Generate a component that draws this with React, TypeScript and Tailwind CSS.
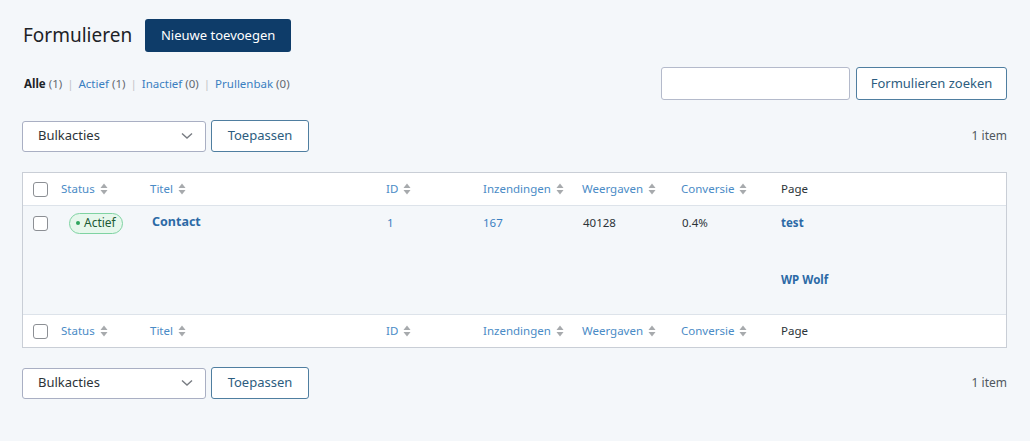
import React from "react";

const font = { fontFamily: '"Noto Sans", "Open Sans", sans-serif' };

function Sort() {
  return (
    <svg width="8" height="12" viewBox="0 0 8 12" className="ml-[5px] inline-block">
      <path d="M4 0.5 L7.5 5 L0.5 5 Z" fill="#a7aaad" />
      <path d="M4 11.5 L7.5 7 L0.5 7 Z" fill="#a7aaad" />
    </svg>
  );
}

function Checkbox() {
  return <div className="w-[15px] h-[15px] rounded-[3px] border border-[#8c8f94] bg-white" />;
}

function HeadRow({ top }: { top?: boolean }) {
  const cols: [string, string, boolean][] = [
    ["Status", "w-[89px]", true],
    ["Titel", "w-[236px]", true],
    ["ID", "w-[97px]", true],
    ["Inzendingen", "w-[99px]", true],
    ["Weergaven", "w-[99px]", true],
    ["Conversie", "w-[100px]", true],
    ["Page", "flex-1", false],
  ];
  return (
    <div
      className={`flex items-center h-[33px] bg-white text-[11.5px] ${
        top ? "border-b border-[#dde3ea]" : "border-t border-[#dde3ea]"
      }`}
    >
      <div className="w-[38px] pl-[10px] flex items-center">
        <Checkbox />
      </div>
      {cols.map(([l, w, s]) => (
        <div key={l} className={`${w} flex items-center`}>
          <span className={s ? "text-[#4a8bc6]" : "text-[#2c3338]"}>{l}</span>
          {s && <Sort />}
        </div>
      ))}
    </div>
  );
}

function Toolbar() {
  return (
    <div className="flex items-center">
      <div className="w-[184px] h-[31px] bg-white border border-[#a9afc3] rounded-[3px] flex items-center justify-between pl-[15px] pr-[12px] text-[13px] text-[#2c3338]">
        <span>Bulkacties</span>
        <svg width="12" height="8" viewBox="0 0 12 8">
          <path d="M1 1.5 L6 6 L11 1.5" stroke="#787c82" strokeWidth="1.4" fill="none" />
        </svg>
      </div>
      <button className="ml-[5px] w-[98px] h-[32px] bg-white border border-[#4f7ea0] rounded-[3px] text-[13px] text-[#2c5d80]">
        Toepassen
      </button>
      <div className="ml-auto text-[12px] text-[#50575e]">1 item</div>
    </div>
  );
}

export default function App() {
  return (
    <div className="w-[1030px] h-[441px] bg-[#f4f7fa] overflow-hidden" style={font}>
      <div className="pl-[22px] pr-[23px]">
        <div className="flex items-center pt-[19px]">
          <h1 className="text-[19px] text-[#1d2327] leading-none ml-[1px]">Formulieren</h1>
          <button className="ml-[13px] h-[33px] w-[146px] bg-[#0e3c69] rounded-[3px] text-white text-[13px]">
            Nieuwe toevoegen
          </button>
        </div>
        <div className="flex items-start mt-[15px]">
          <div className="text-[11.5px] mt-[8px] ml-[2px] text-[#646970]">
            <span className="font-bold text-[#1d2327]">Alle</span> (1) <span className="text-[#c3c4c7] mx-[2px]">|</span>{" "}
            <span className="text-[#3a7fc1]">Actief</span> (1) <span className="text-[#c3c4c7] mx-[2px]">|</span>{" "}
            <span className="text-[#3a7fc1]">Inactief</span> (0) <span className="text-[#c3c4c7] mx-[2px]">|</span>{" "}
            <span className="text-[#3a7fc1]">Prullenbak</span> (0)
          </div>
          <div className="ml-auto flex">
            <div className="w-[189px] h-[33px] bg-white border border-[#b4bacb] rounded-[3px]" />
            <button className="ml-[6px] w-[151px] h-[33px] bg-white border border-[#4f7ea0] rounded-[3px] text-[13px] text-[#2c5d80]">
              Formulieren zoeken
            </button>
          </div>
        </div>
        <div className="mt-[20px]">
          <Toolbar />
        </div>
        <div className="mt-[20px] border border-[#c9ced6]">
          <HeadRow top />
          <div className="h-[108px] bg-[#f4f7fa] flex text-[11.5px]">
            <div className="w-[38px] pl-[10px] pt-[10px]">
              <Checkbox />
            </div>
            <div className="w-[89px] pl-[8px] pt-[6px]">
              <span className="inline-flex items-center h-[21px] px-[6px] rounded-full border border-[#7fd3a2] bg-[#e6f7ec] text-[#1d5a34] text-[12px]">
                <span className="w-[4px] h-[4px] rounded-full bg-[#2fa55e] mr-[4px]" />
                Actief
              </span>
            </div>
            <div className="w-[236px] pl-[2px] pt-[7px] font-bold text-[12.5px] text-[#2c6aa6]">Contact</div>
            <div className="w-[97px] pl-[1px] pt-[8px] text-[#3a7fc1]">1</div>
            <div className="w-[99px] pt-[8px] text-[#3a7fc1]">167</div>
            <div className="w-[99px] pl-[1px] pt-[8px] text-[#2c3338]">40128</div>
            <div className="w-[100px] pl-[1px] pt-[8px] text-[#2c3338]">0.4%</div>
            <div className="flex-1 pt-[8px] font-bold text-[#2c6aa6]">
              <div>test</div>
              <div className="mt-[40px]">WP Wolf</div>
            </div>
          </div>
          <HeadRow />
        </div>
        <div className="mt-[19px]">
          <Toolbar />
        </div>
      </div>
    </div>
  );
}
